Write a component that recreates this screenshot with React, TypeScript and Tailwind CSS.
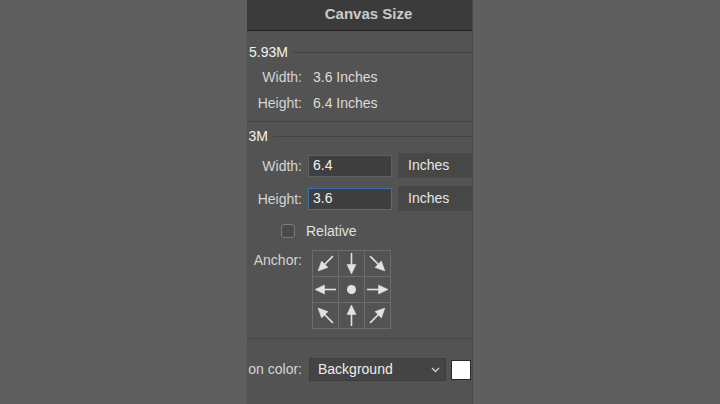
const font = "font-['Liberation_Sans',Arial,sans-serif]";

const labelClass = "w-[55px] shrink-0 text-right text-[14px] leading-[20px] text-[#d4d4d4]";

function Arrow({ angle }: { angle: number }) {
  return (
    <svg width="25" height="25" viewBox="0 0 25 25">
      <g transform={`rotate(${angle} 12.5 12.5)`} fill="#e2e2e2" stroke="#e2e2e2">
        <line x1="2" y1="12.5" x2="16" y2="12.5" strokeWidth="1.6" />
        <polygon points="13.5,8 23,12.5 13.5,17" strokeWidth="0.5" />
      </g>
    </svg>
  );
}

function AnchorGrid() {
  const cells: (number | null)[] = [135, 90, 45, 180, null, 0, -135, -90, -45];
  return (
    <div className="grid grid-cols-[repeat(3,25px)] grid-rows-[repeat(3,25px)] gap-px bg-[#6c6c6c] p-px">
      {cells.map((angle, i) => (
        <div key={i} className="flex items-center justify-center bg-[#535353]">
          {angle === null ? (
            <div className="h-[9px] w-[9px] rounded-full bg-[#e2e2e2]" />
          ) : (
            <Arrow angle={angle} />
          )}
        </div>
      ))}
    </div>
  );
}

function Divider({ className = "" }: { className?: string }) {
  return <div className={`h-px bg-[#454545] ${className}`} />;
}

function Chevron() {
  return (
    <svg width="9" height="6" viewBox="0 0 9 6" className="shrink-0">
      <path d="M1 1l3.5 3.5L8 1" fill="none" stroke="#cfcfcf" strokeWidth="1.3" />
    </svg>
  );
}

export default function App() {
  return (
    <div className={`flex h-[404px] w-[720px] bg-[#5e5e5e] ${font}`}>
      <div className="ml-[247px] flex w-[226px] flex-col overflow-hidden border-r border-[#4a4a4a] bg-[#535353]">
        <div className="flex h-[31px] shrink-0 items-center justify-center border-b border-[#222222] bg-[#3b3b3b] pb-[2px] pl-[18px]">
          <span className="text-[15px] font-bold text-[#cacaca]">Canvas Size</span>
        </div>

        {/* current size */}
        <div className="mt-[11px] flex h-[20px] items-center">
          <span className="w-[41px] shrink-0 whitespace-nowrap text-right text-[14px] text-[#f2f2f2]">5.93M</span>
          <div className="ml-[5px] h-px flex-1 bg-[#434343]" />
        </div>
        <div className="mt-[5px] flex h-[20px] items-center">
          <span className={labelClass}>Width:</span>
          <span className="ml-[11px] text-[14px] text-[#dcdcdc]">3.6 Inches</span>
        </div>
        <div className="mt-[6px] flex h-[20px] items-center">
          <span className={labelClass}>Height:</span>
          <span className="ml-[11px] text-[14px] text-[#dcdcdc]">6.4 Inches</span>
        </div>
        <Divider className="mt-[8px]" />

        {/* new size */}
        <div className="mt-[4px] flex h-[20px] items-center">
          <span className="w-[21px] shrink-0 whitespace-nowrap text-right text-[14px] text-[#f2f2f2]">3M</span>
          <div className="ml-[5px] h-px flex-1 bg-[#434343]" />
        </div>
        <div className="mt-[7px] flex h-[25px] items-center">
          <span className={labelClass}>Width:</span>
          <div className="ml-[6px] flex h-[22px] w-[84px] shrink-0 items-center border border-[#5f5f5f] bg-[#3f3f3f] pl-[4px] text-[14px] text-[#f2f2f2]">
            6.4
          </div>
          <div className="ml-[6px] flex h-[25px] w-[90px] shrink-0 items-center border border-[#4a4a4a] bg-[#474747] pl-[9px] text-[14px] text-[#e6e6e6]">
            Inches
          </div>
        </div>
        <div className="mt-[8px] flex h-[25px] items-center">
          <span className={labelClass}>Height:</span>
          <div className="ml-[6px] flex h-[22px] w-[84px] shrink-0 items-center border border-[#3d6db3] bg-[#3f3f3f] pl-[4px] text-[14px] text-[#f2f2f2]">
            3.6
          </div>
          <div className="ml-[6px] flex h-[25px] w-[90px] shrink-0 items-center border border-[#4a4a4a] bg-[#474747] pl-[9px] text-[14px] text-[#e6e6e6]">
            Inches
          </div>
        </div>
        <div className="mt-[12px] flex h-[16px] items-center">
          <div className="ml-[34px] h-[14px] w-[14px] shrink-0 rounded-[3px] border border-[#7a7a7a] bg-[#4a4a4a]" />
          <span className="ml-[11px] text-[14px] text-[#e0e0e0]">Relative</span>
        </div>
        <div className="mt-[11px] flex items-start">
          <span className={`${labelClass} leading-[18px]`}>Anchor:</span>
          <div className="ml-[10px]">
            <AnchorGrid />
          </div>
        </div>
        <Divider className="mt-[9px]" />

        {/* extension color */}
        <div className="mt-[19px] flex h-[23px] items-center">
          <span className="w-[55px] shrink-0 whitespace-nowrap text-right text-[14px] text-[#d4d4d4]">on color:</span>
          <div className="ml-[7px] flex h-[23px] w-[137px] shrink-0 items-center justify-between border border-[#3d3d3d] bg-[#444444] pl-[8px] pr-[5px] text-[14px] text-[#ececec]">
            <span>Background</span>
            <Chevron />
          </div>
          <div className="ml-[5px] h-[20px] w-[20px] shrink-0 border border-[#2a2a2a] bg-white" />
        </div>
      </div>
    </div>
  );
}
